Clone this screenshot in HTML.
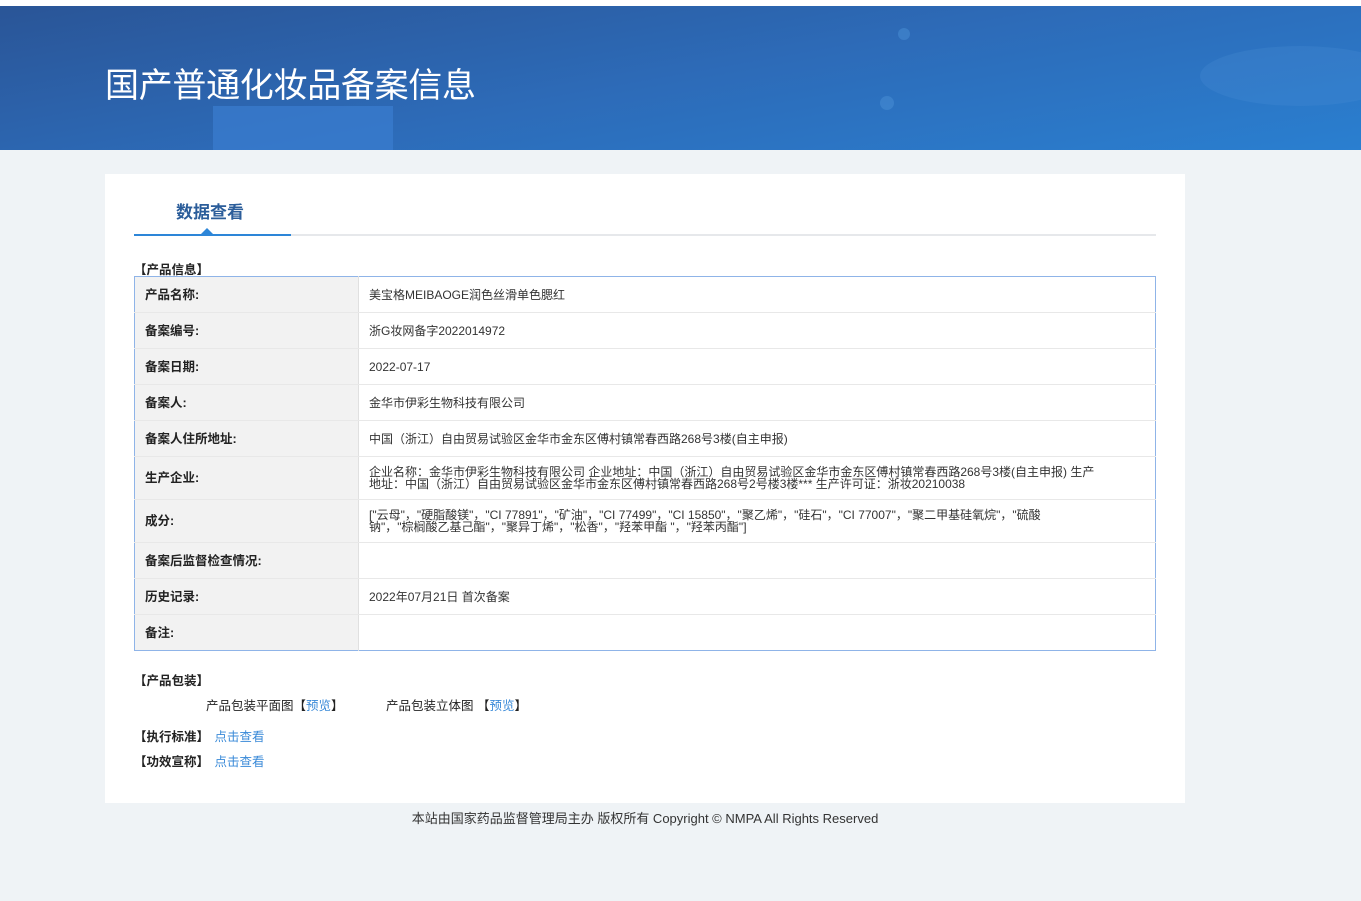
<!DOCTYPE html><html><head><meta charset="utf-8"><style>
body{margin:0;background:#eff3f6;font-family:"Liberation Sans","Noto Sans CJK SC",sans-serif;width:1361px;height:901px;position:relative;overflow:hidden}
.top{position:absolute;left:0;top:0;width:1361px;height:6px;background:#fff}
.ban{position:absolute;left:0;top:6px;width:1361px;height:144px;background:linear-gradient(170deg,#2a5597 0%,#2d6bb8 50%,#2a7fd0 100%);overflow:hidden}
.ban .b1{position:absolute;left:213px;top:100px;width:180px;height:60px;background:#3b7dd0;opacity:.7}
.ban .c{position:absolute;border-radius:50%;background:#4a8fd6;opacity:.5}
.ban h1{position:absolute;left:105px;top:52px;margin:0;color:#fff;font-weight:normal;font-size:34px;letter-spacing:-0.3px}
.card{position:absolute;left:105px;top:174px;width:1080px;height:629px;background:#fff}
.tab{position:absolute;left:71px;top:24px;font-size:17px;font-weight:bold;color:#2b5d9a}
.line{position:absolute;left:29px;top:60px;width:1022px;height:2px;background:#e6e8eb}
.line2{position:absolute;left:29px;top:60px;width:157px;height:2px;background:#2d86d8}
.tri{position:absolute;left:96px;top:54px;width:0;height:0;border:6px solid transparent;border-bottom-color:#2d86d8;border-top:0}
.sec{position:absolute;font-size:12.5px;font-weight:bold;color:#222}
table{position:absolute;left:29px;top:102px;width:1022px;border-collapse:collapse;border:1px solid #8fb4e8;font-size:12px;color:#333}
td{border-bottom:1px solid #e8e8e8;padding:0 10px;height:35px;line-height:12px}
td.l{width:203px;background:#f2f2f2;font-weight:bold;color:#222;font-size:12.5px;border-right:1px solid #e0e0e0}
.t{position:absolute;font-size:12.5px;color:#222}
a{color:#3a8ad8;text-decoration:none}
.foot{position:absolute;left:0;width:1290px;text-align:center;top:808px;font-size:13px;color:#333}
</style></head><body>
<div class="top"></div>
<div class="ban"><div class="b1"></div><div class="c" style="left:1200px;top:40px;width:200px;height:60px;opacity:.25"></div><div class="c" style="left:880px;top:90px;width:14px;height:14px"></div><div class="c" style="left:898px;top:22px;width:12px;height:12px"></div><h1>国产普通化妆品备案信息</h1></div>
<div class="card">
<div class="tab">数据查看</div><div class="line"></div><div class="line2"></div><div class="tri"></div>
<div class="sec" style="left:29px;top:85px">【产品信息】</div>
<table>
<tr><td class="l">产品名称:</td><td>美宝格MEIBAOGE润色丝滑单色腮红</td></tr>
<tr><td class="l">备案编号:</td><td>浙G妆网备字2022014972</td></tr>
<tr><td class="l">备案日期:</td><td>2022-07-17</td></tr>
<tr><td class="l">备案人:</td><td>金华市伊彩生物科技有限公司</td></tr>
<tr><td class="l">备案人住所地址:</td><td>中国（浙江）自由贸易试验区金华市金东区傅村镇常春西路268号3楼(自主申报)</td></tr>
<tr><td class="l" style="height:42px">生产企业:</td><td>企业名称：金华市伊彩生物科技有限公司 企业地址：中国（浙江）自由贸易试验区金华市金东区傅村镇常春西路268号3楼(自主申报) 生产<br>地址：中国（浙江）自由贸易试验区金华市金东区傅村镇常春西路268号2号楼3楼*** 生产许可证：浙妆20210038</td></tr>
<tr><td class="l" style="height:42px">成分:</td><td>["云母"，"硬脂酸镁"，"CI 77891"，"矿油"，"CI 77499"，"CI 15850"，"聚乙烯"，"硅石"，"CI 77007"，"聚二甲基硅氧烷"，"硫酸<br>钠"，"棕榈酸乙基己酯"，"聚异丁烯"，"松香"，"羟苯甲酯 "，"羟苯丙酯"]</td></tr>
<tr><td class="l">备案后监督检查情况:</td><td></td></tr>
<tr><td class="l">历史记录:</td><td>2022年07月21日 首次备案</td></tr>
<tr><td class="l" style="border-bottom:0">备注:</td><td style="border-bottom:0"></td></tr>
</table>
<div class="sec" style="left:29px;top:496px">【产品包装】</div>
<div class="t" style="left:101px;top:521px">产品包装平面图【<a>预览</a>】</div>
<div class="t" style="left:281px;top:521px">产品包装立体图 【<a>预览</a>】</div>
<div class="sec" style="left:29px;top:552px">【执行标准】 <a style="font-weight:normal;margin-left:2px">点击查看</a></div>
<div class="sec" style="left:29px;top:577px">【功效宣称】 <a style="font-weight:normal;margin-left:2px">点击查看</a></div>
</div>
<div class="foot">本站由国家药品监督管理局主办 版权所有 Copyright © NMPA All Rights Reserved</div>
</body></html>
